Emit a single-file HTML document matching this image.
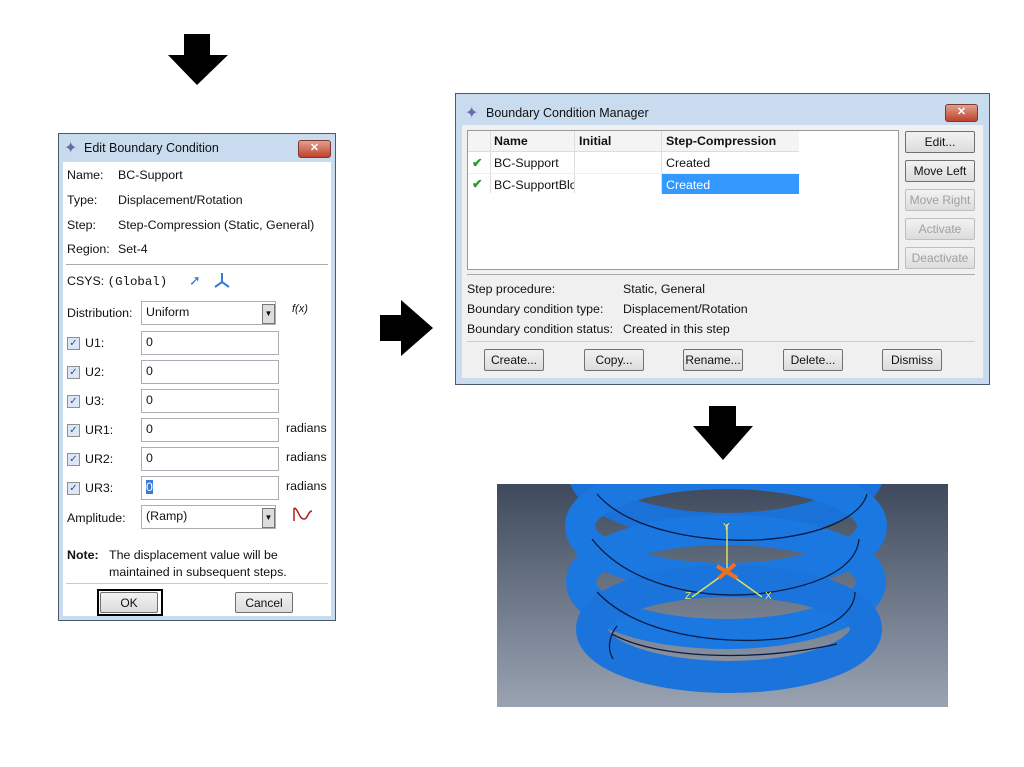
<!DOCTYPE html>
<html><head><style>
body{margin:0;width:1024px;height:767px;background:#fff;position:relative;overflow:hidden;font-family:"Liberation Sans",sans-serif;font-size:12.4px;color:#111}
.a{position:absolute}
.t{position:absolute;white-space:nowrap}
.inp{position:absolute;background:#fff;border:1px solid #abadb3;height:22px;box-sizing:border-box;padding:3px 4px}
.cb{position:absolute;width:11px;height:11px;border:1px solid #8e8f8f;background:#dde6f4;font-size:10px;line-height:11px;text-align:center;color:#2b4f9a}
.btn{position:absolute;box-sizing:border-box;border:1px solid #707070;border-radius:2px;background:linear-gradient(#f2f2f2,#dcdcdc);text-align:center;font-size:12px;line-height:20px}
.dis{color:#a0a0a0;border-color:#bfbfbf}
.x{position:absolute;background:linear-gradient(#e0a090,#c0412a);border:1px solid #7a3a30;border-radius:3px;color:#fff;font-weight:bold;text-align:center;font-size:11px;line-height:15px}
</style></head><body>
<svg class="a" style="left:166px;top:33px" width="64" height="54"><polygon points="18,1 44,1 44,22 62,22 31,52 2,22 18,22" fill="#000"/></svg>
<svg class="a" style="left:379px;top:299px" width="56" height="58"><polygon points="1,16 22,16 22,1 54,29 22,57 22,42 1,42" fill="#000"/></svg>
<svg class="a" style="left:692px;top:405px" width="62" height="56"><polygon points="17,1 44,1 44,21 61,21 31,55 1,21 17,21" fill="#000"/></svg>

<div class="a" style="left:58px;top:133px;width:278px;height:488px;background:#c9dbee;border:1px solid #4a5a6a;box-sizing:border-box"></div>
<div class="a" style="left:63px;top:162px;width:268px;height:454px;background:#fff"></div>
<div class="t" style="left:64px;top:138px;font-size:16px;color:#6a6aa8">✦</div>
<div class="t" style="left:84px;top:141px;font-size:12.5px">Edit Boundary Condition</div>
<div class="x" style="left:298px;top:140px;width:31px;height:16px">✕</div>
<div class="t" style="left:67px;top:168px">Name:</div><div class="t" style="left:118px;top:168px">BC-Support</div>
<div class="t" style="left:67px;top:193px">Type:</div><div class="t" style="left:118px;top:193px">Displacement/Rotation</div>
<div class="t" style="left:67px;top:218px">Step:</div><div class="t" style="left:118px;top:218px">Step-Compression (Static, General)</div>
<div class="t" style="left:67px;top:242px">Region:</div><div class="t" style="left:118px;top:242px">Set-4</div>
<div class="a" style="left:66px;top:264px;width:262px;height:1px;background:#aaa"></div>
<div class="t" style="left:67px;top:274px">CSYS: <span style="font-family:'Liberation Mono',monospace">(Global)</span></div>
<div class="t" style="left:189px;top:272px;color:#3a7ad8;font-size:14px">➚</div>
<svg class="a" style="left:213px;top:272px" width="18" height="16"><path d="M9 1V10M9 10L2 15M9 10L16 15" stroke="#3a7ad8" stroke-width="2" fill="none"/></svg>
<div class="t" style="left:67px;top:306px">Distribution:</div>
<div class="inp" style="left:141px;top:301px;width:135px;height:24px">Uniform</div>
<div class="a" style="left:262px;top:304px;width:11px;height:18px;background:#ddd;border:1px solid #777;font-size:8px;text-align:center;line-height:18px">▼</div>
<div class="t" style="left:292px;top:303px;font-style:italic;font-size:11px">f(x)</div>
<div class="cb" style="left:67px;top:337px">✓</div><div class="t" style="left:85px;top:336px">U1:</div><div class="inp" style="left:141px;top:331px;width:138px;height:24px">0</div>
<div class="cb" style="left:67px;top:366px">✓</div><div class="t" style="left:85px;top:365px">U2:</div><div class="inp" style="left:141px;top:360px;width:138px;height:24px">0</div>
<div class="cb" style="left:67px;top:395px">✓</div><div class="t" style="left:85px;top:394px">U3:</div><div class="inp" style="left:141px;top:389px;width:138px;height:24px">0</div>
<div class="cb" style="left:67px;top:424px">✓</div><div class="t" style="left:85px;top:423px">UR1:</div><div class="inp" style="left:141px;top:418px;width:138px;height:24px">0</div><div class="t" style="left:286px;top:421px">radians</div>
<div class="cb" style="left:67px;top:453px">✓</div><div class="t" style="left:85px;top:452px">UR2:</div><div class="inp" style="left:141px;top:447px;width:138px;height:24px">0</div><div class="t" style="left:286px;top:450px">radians</div>
<div class="cb" style="left:67px;top:482px">✓</div><div class="t" style="left:85px;top:481px">UR3:</div><div class="inp" style="left:141px;top:476px;width:138px;height:24px"><span style="background:#3a7ad8;color:#fff">0</span></div><div class="t" style="left:286px;top:479px">radians</div>
<div class="t" style="left:67px;top:511px">Amplitude:</div>
<div class="inp" style="left:141px;top:505px;width:135px;height:24px">(Ramp)</div>
<div class="a" style="left:262px;top:508px;width:11px;height:18px;background:#ddd;border:1px solid #777;font-size:8px;text-align:center;line-height:18px">▼</div>
<svg class="a" style="left:291px;top:505px" width="24" height="18"><path d="M3 16V3M3 3C7 3 8 14 13 14C17 14 17 6 21 6" stroke="#b02020" stroke-width="1.5" fill="none"/></svg>
<div class="t" style="left:67px;top:548px"><b>Note:</b></div>
<div class="t" style="left:109px;top:548px">The displacement value will be</div>
<div class="t" style="left:109px;top:565px">maintained in subsequent steps.</div>
<div class="a" style="left:66px;top:583px;width:262px;height:1px;background:#ccc"></div>
<div class="a" style="left:97px;top:589px;width:66px;height:27px;border:2px solid #000;box-sizing:border-box"></div>
<div class="btn" style="left:100px;top:592px;width:58px;height:21px">OK</div>
<div class="btn" style="left:235px;top:592px;width:58px;height:21px">Cancel</div>

<div class="a" style="left:455px;top:93px;width:535px;height:292px;background:#c9dbee;border:1px solid #4a5a6a;box-sizing:border-box"></div>
<div class="a" style="left:462px;top:125px;width:521px;height:253px;background:#f0f0f0"></div>
<div class="t" style="left:465px;top:103px;font-size:16px;color:#6a6aa8">✦</div>
<div class="t" style="left:486px;top:106px;font-size:12.5px">Boundary Condition Manager</div>
<div class="x" style="left:945px;top:104px;width:31px;height:16px">✕</div>
<div class="a" style="left:467px;top:130px;width:432px;height:140px;background:#fff;border:1px solid #999;box-sizing:border-box"></div>
<div class="a" style="left:468px;top:131px;width:331px;height:20px;background:#f4f4f4;border-bottom:1px solid #ddd"></div>
<div class="t" style="left:494px;top:134px;font-weight:bold">Name</div>
<div class="t" style="left:579px;top:134px;font-weight:bold">Initial</div>
<div class="t" style="left:666px;top:134px;font-weight:bold">Step-Compression</div>
<div class="a" style="left:490px;top:131px;width:1px;height:62px;background:#ddd"></div>
<div class="a" style="left:574px;top:131px;width:1px;height:62px;background:#ddd"></div>
<div class="a" style="left:661px;top:131px;width:1px;height:62px;background:#ddd"></div>
<div class="a" style="left:468px;top:173px;width:331px;height:1px;background:#eee"></div>
<div class="t" style="left:472px;top:155px;color:#2a9a2a;font-weight:bold">✔</div>
<div class="t" style="left:494px;top:156px">BC-Support</div>
<div class="t" style="left:666px;top:156px">Created</div>
<div class="t" style="left:472px;top:176px;color:#2a9a2a;font-weight:bold">✔</div>
<div class="t" style="left:494px;top:178px;width:80px;overflow:hidden">BC-SupportBlock</div>
<div class="a" style="left:662px;top:174px;width:137px;height:20px;background:#3399ff"></div>
<div class="t" style="left:666px;top:178px;color:#fff">Created</div>
<div class="btn" style="left:905px;top:131px;width:70px;height:22px">Edit...</div>
<div class="btn" style="left:905px;top:160px;width:70px;height:22px">Move Left</div>
<div class="btn dis" style="left:905px;top:189px;width:70px;height:22px">Move Right</div>
<div class="btn dis" style="left:905px;top:218px;width:70px;height:22px">Activate</div>
<div class="btn dis" style="left:905px;top:247px;width:70px;height:22px">Deactivate</div>
<div class="a" style="left:467px;top:274px;width:508px;height:1px;background:#aaa"></div>
<div class="t" style="left:467px;top:282px">Step procedure:</div><div class="t" style="left:623px;top:282px">Static, General</div>
<div class="t" style="left:467px;top:302px">Boundary condition type:</div><div class="t" style="left:623px;top:302px">Displacement/Rotation</div>
<div class="t" style="left:467px;top:322px">Boundary condition status:</div><div class="t" style="left:623px;top:322px">Created in this step</div>
<div class="a" style="left:467px;top:341px;width:508px;height:1px;background:#ccc"></div>
<div class="btn" style="left:484px;top:349px;width:60px;height:22px">Create...</div>
<div class="btn" style="left:584px;top:349px;width:60px;height:22px">Copy...</div>
<div class="btn" style="left:683px;top:349px;width:60px;height:22px">Rename...</div>
<div class="btn" style="left:783px;top:349px;width:60px;height:22px">Delete...</div>
<div class="btn" style="left:882px;top:349px;width:60px;height:22px">Dismiss</div>

<svg class="a" style="left:497px;top:484px" width="451" height="223">
<defs><linearGradient id="bg" x1="0" y1="0" x2="0" y2="1"><stop offset="0" stop-color="#3e4a5c"/><stop offset="1" stop-color="#9aa3b2"/></linearGradient></defs>
<rect width="451" height="223" fill="url(#bg)"/>
<g fill="none">
<ellipse cx="229" cy="-15" rx="145" ry="58" stroke="#1a72d8" stroke-width="28"/>
<ellipse cx="229" cy="42" rx="146" ry="52" stroke="#1b78e0" stroke-width="30"/>
<ellipse cx="229" cy="98" rx="145" ry="52" stroke="#1b78e0" stroke-width="30"/>
<ellipse cx="232" cy="145" rx="137" ry="48" stroke="#1a74dc" stroke-width="32"/>
<path d="M100 10 C130 45 200 58 260 56 C330 52 365 30 370 10" stroke="#0a1a40" stroke-width="1.3"/>
<path d="M95 55 C130 100 200 115 260 110 C330 102 360 80 362 55" stroke="#0a1a40" stroke-width="1.3"/>
<path d="M100 108 C140 150 220 162 290 154 C340 145 358 125 358 108" stroke="#0a1a40" stroke-width="1.3"/>
<path d="M115 150 C160 175 260 178 340 160" stroke="#0a1a40" stroke-width="1.3"/>
<path d="M120 142 C112 152 110 165 116 175" stroke="#0a1a40" stroke-width="1.3"/>
<path d="M230 40 L230 88 M230 88 L195 113 M230 88 L265 113" stroke="#d8e060" stroke-width="1.5"/>
<path d="M220 82 L240 94 M222 94 L238 80" stroke="#f07020" stroke-width="4"/>
</g>
<text x="226" y="46" fill="#e8e870" font-size="10">Y</text>
<text x="188" y="115" fill="#e8e870" font-size="10">Z</text>
<text x="268" y="115" fill="#e8e870" font-size="10">X</text>
</svg>
</body></html>
